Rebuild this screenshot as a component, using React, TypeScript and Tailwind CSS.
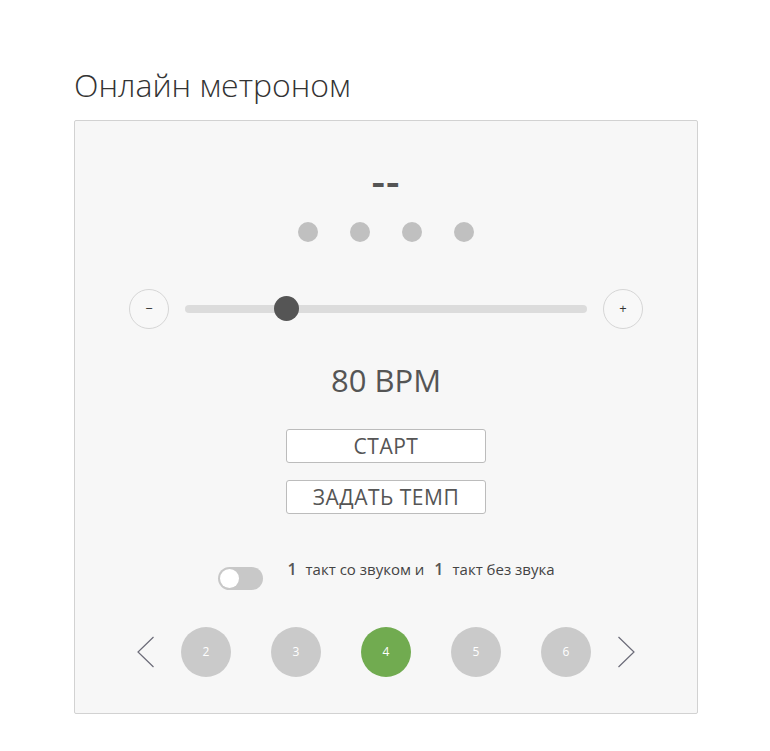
import React from "react";

const font = { fontFamily: '"Open Sans", "Noto Sans", sans-serif' };

function Chevron({ dir }: { dir: "left" | "right" }) {
  return (
    <svg width="18" height="32" viewBox="0 0 18 32" className="shrink-0">
      {dir === "left" ? (
        <polyline points="16.5,1 1,16 16.5,31" fill="none" stroke="#6b6b78" strokeWidth="1.2" />
      ) : (
        <polyline points="1.5,1 17,16 1.5,31" fill="none" stroke="#6b6b78" strokeWidth="1.2" />
      )}
    </svg>
  );
}

export default function App() {
  const pages = [2, 3, 4, 5, 6];
  return (
    <div className="w-[770px] h-[751px] bg-white pl-[74px] pt-[64px]" style={font}>
      <h1 className="text-[32px] leading-[42px] font-light text-[#333] h-[42px] mb-[14px]">
        Онлайн метроном
      </h1>
      <div className="w-[624px] h-[594px] bg-[#f7f7f7] border border-[#d2d2d2] rounded-[2px] flex flex-col items-center pt-[34px]">
        <div className="h-[50px] flex items-center justify-center text-[#555] text-[42px] font-semibold leading-[50px] tracking-[1px]">
          --
        </div>
        <div className="mt-[17px] flex gap-[32px]">
          {[0, 1, 2, 3].map((i) => (
            <div key={i} className="w-[20px] h-[20px] rounded-full bg-[#c0c0c0]" />
          ))}
        </div>
        <div className="mt-[47px] flex items-center gap-[16px] h-[40px]">
          <div className="w-[40px] h-[40px] rounded-full border border-[#d6d6d6] bg-[#f8f8f8] flex items-center justify-center text-[#333] text-[13px]">
            −
          </div>
          <div className="relative w-[402px] h-[8px] rounded-full bg-[#dcdcdc]">
            <div className="absolute left-[89px] top-[-9px] w-[25px] h-[25px] rounded-full bg-[#555]" />
          </div>
          <div className="w-[40px] h-[40px] rounded-full border border-[#d6d6d6] bg-[#f8f8f8] flex items-center justify-center text-[#333] text-[13px]">
            +
          </div>
        </div>
        <div className="mt-[31px] h-[40px] leading-[40px] text-[31px] text-[#555]">80 BPM</div>
        <button className="mt-[29px] w-[200px] h-[34px] bg-white border border-[#bcbcbc] rounded-[3px] text-[21px] tracking-[0.5px] text-[#555] leading-[32px]">
          СТАРТ
        </button>
        <button className="mt-[17px] w-[200px] h-[34px] bg-white border border-[#bcbcbc] rounded-[3px] text-[21px] tracking-[0.5px] text-[#555] leading-[32px]">
          ЗАДАТЬ ТЕМП
        </button>
        <div className="mt-[52px] h-[24px] flex items-start ml-[1px]">
          <div className="mt-[1px] w-[45px] h-[23px] rounded-full bg-[#c8c8c8] relative">
            <div className="absolute left-[2px] top-[2px] w-[19px] h-[19px] rounded-full bg-white" />
          </div>
          <div className="ml-[24px] mt-[-9px] flex items-baseline text-[15px] text-[#444]">
            <span className="text-[16px] font-semibold text-[#555] mr-[9px]">1</span>
            <span>такт со звуком и</span>
            <span className="text-[16px] font-semibold text-[#555] ml-[10px] mr-[9px]">1</span>
            <span>такт без звука</span>
          </div>
        </div>
        <div className="mt-[37px] flex items-center">
          <Chevron dir="left" />
          <div className="flex gap-[40px] mx-[26px]">
            {pages.map((p) => (
              <div
                key={p}
                className={
                  p === 4
                    ? "w-[50px] h-[50px] rounded-full bg-[#71ab50] text-white text-[12px] flex items-center justify-center"
                    : "w-[50px] h-[50px] rounded-full bg-[#cacaca] text-white text-[12px] flex items-center justify-center"
                }
              >
                {p}
              </div>
            ))}
          </div>
          <Chevron dir="right" />
        </div>
      </div>
    </div>
  );
}
